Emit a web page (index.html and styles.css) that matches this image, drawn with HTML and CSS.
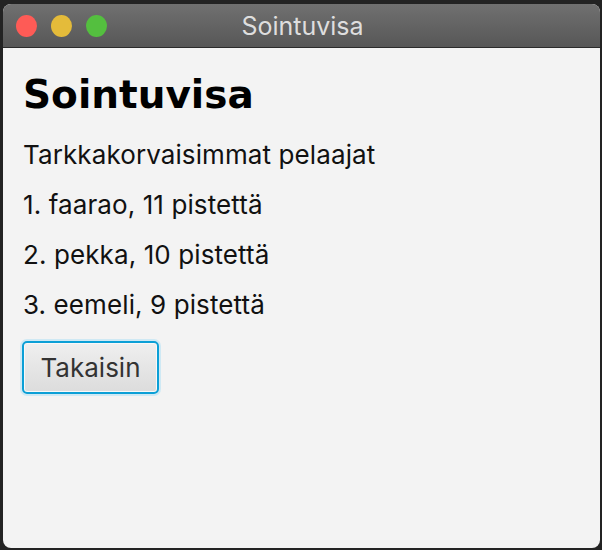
FILE: index.html
```html
<!DOCTYPE html>
<html lang="fi">
<head>
<meta charset="utf-8">
<title>Sointuvisa</title>
<link rel="stylesheet" href="styles.css">
</head>
<body>
<div class="window">
  <div class="titlebar">
    <div class="lights">
      <span class="light red"></span>
      <span class="light yellow"></span>
      <span class="light green"></span>
    </div>
    <div class="title">Sointuvisa</div>
  </div>
  <div class="content">
    <h1 class="heading">Sointuvisa</h1>
    <div class="lines">
      <p class="line">Tarkkakorvaisimmat pelaajat</p>
      <p class="line">1. faarao, 11 pistettä</p>
      <p class="line">2. pekka, 10 pistettä</p>
      <p class="line">3. eemeli, 9 pistettä</p>
    </div>
    <div class="actions">
      <button class="btn">Takaisin</button>
    </div>
  </div>
</div>
</body>
</html>
```

FILE: styles.css
```css
html, body {
  margin: 0;
  padding: 0;
}
body {
  background: #232323;
  width: 602px;
  height: 550px;
  overflow: hidden;
}
.window {
  margin: 4px 2px 0 3px;
  height: 544px;
  border-radius: 8px;
  overflow: hidden;
  display: flex;
  flex-direction: column;
  background: #f3f3f3;
}
.titlebar {
  position: relative;
  height: 43px;
  flex: none;
  background: linear-gradient(#707070, #575757);
  border-bottom: 1px solid #2b2b2b;
  display: flex;
  align-items: center;
}
.lights {
  display: flex;
  gap: 14px;
  padding-left: 13px;
}
.light {
  width: 21px;
  height: 22px;
  border-radius: 50%;
}
.red { background: #fe5b56; }
.yellow { background: #e4bb3a; }
.green { background: #54bf3f; }
.title {
  position: absolute;
  left: 0;
  right: 0;
  top: 0;
  bottom: 0;
  display: flex;
  align-items: center;
  justify-content: center;
  color: #dedede;
  font-family: Inter, "Liberation Sans", sans-serif;
  font-size: 25px;
  padding-left: 2px;
}
.content {
  flex: 1;
  padding: 19px 20px 0 20px;
  font-family: Inter, "Liberation Sans", sans-serif;
  color: #111;
}
.heading {
  margin: 0;
  font-family: "DejaVu Sans", sans-serif;
  font-weight: bold;
  font-size: 39px;
  line-height: 56px;
  color: #000;
}
.lines {
  padding-top: 7px;
}
.line {
  margin: 0;
  font-size: 26px;
  letter-spacing: 0.1px;
  line-height: 50px;
  height: 50px;
}
.actions {
  padding-top: 11px;
}
.btn {
  margin-left: -1px;
  width: 137px;
  height: 53px;
  border: 2px solid #0b9fd6;
  border-radius: 5px;
  background: linear-gradient(#efefef, #dcdcdc);
  box-shadow: 0 0 0 2px #cfe9f4, inset 0 0 0 1px #f8f8f8;
  font-family: Inter, "Liberation Sans", sans-serif;
  font-size: 26px;
  color: #333;
  padding: 0;
}
```
